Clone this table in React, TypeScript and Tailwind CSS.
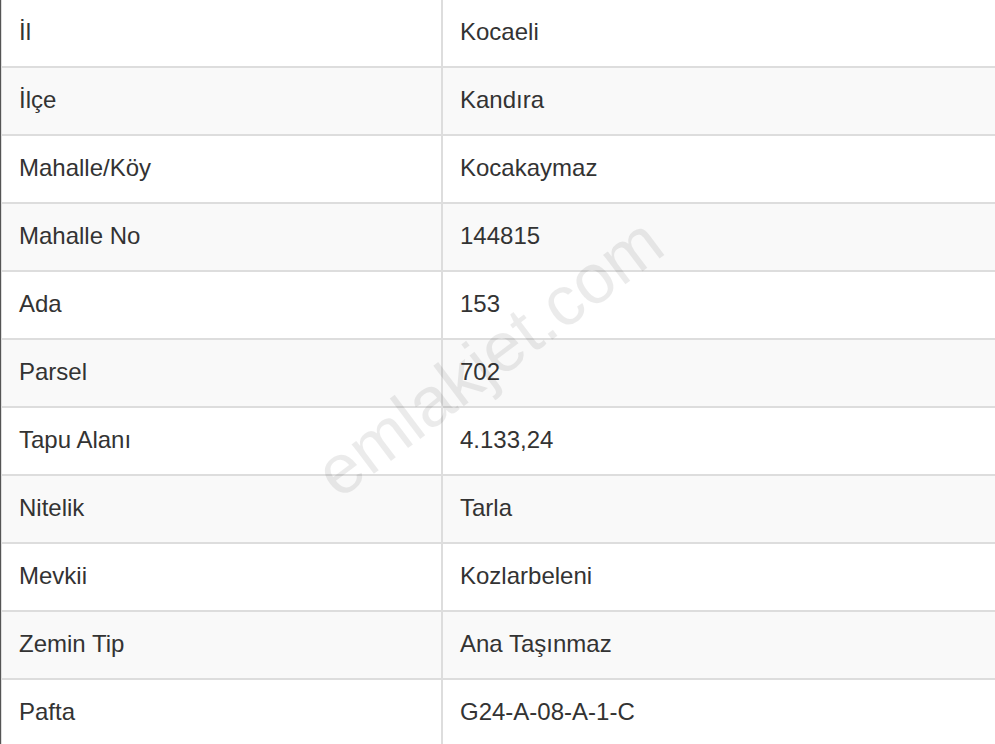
import React from "react";

const rows: [string, string][] = [
  ["İl", "Kocaeli"],
  ["İlçe", "Kandıra"],
  ["Mahalle/Köy", "Kocakaymaz"],
  ["Mahalle No", "144815"],
  ["Ada", "153"],
  ["Parsel", "702"],
  ["Tapu Alanı", "4.133,24"],
  ["Nitelik", "Tarla"],
  ["Mevkii", "Kozlarbeleni"],
  ["Zemin Tip", "Ana Taşınmaz"],
  ["Pafta", "G24-A-08-A-1-C"],
];

export default function App() {
  return (
    <div
      className="relative h-[744px] w-[995px] overflow-hidden bg-white text-[24px] text-[#333]"
      style={{ fontFamily: '"Liberation Sans", Arial, sans-serif' }}
    >
      <div className="flex flex-col border-l border-[#555]">
        {rows.map(([k, v], i) => (
          <div
            key={k}
            className={
              "flex h-[68px] shrink-0 border-b-2 border-l border-[#ddd] " +
              (i % 2 === 1 ? "bg-[#f9f9f9]" : "bg-white")
            }
          >
            <div className="flex w-[439px] shrink-0 items-center pb-[2px] pl-[17px]">{k}</div>
            <div className="flex flex-1 items-center border-l-2 border-[#ddd] pb-[2px] pl-[17px]">{v}</div>
          </div>
        ))}
      </div>
      <div className="pointer-events-none absolute left-[489px] top-[357px] -translate-x-1/2 -translate-y-1/2 -rotate-[37deg] whitespace-nowrap text-[70px] leading-none text-[#000]/[0.08]">
        emlakjet.com
      </div>
    </div>
  );
}
